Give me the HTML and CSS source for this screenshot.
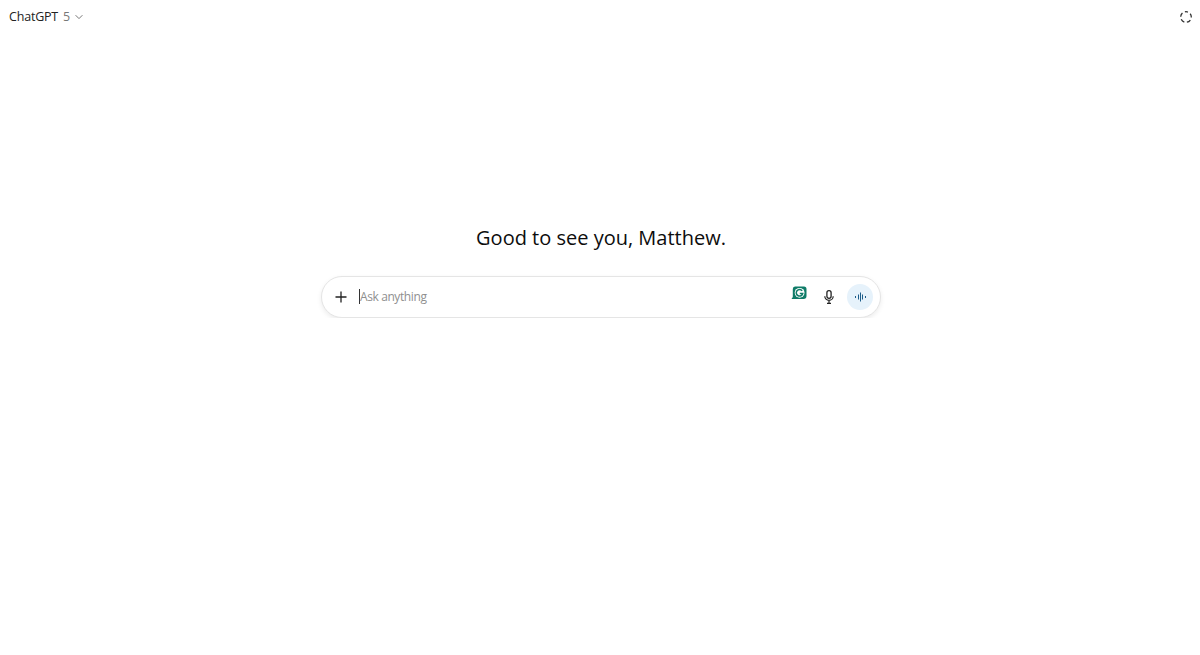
FILE: index.html
```html
<!DOCTYPE html>
<html lang="en">
<head>
    <meta charset="UTF-8">
    <meta name="viewport" content="width=device-width, initial-scale=1.0">
    <title>ChatGPT</title>
    <link rel="stylesheet" href="styles.css">
</head>
<body>
    <header class="top-bar">
        <div class="model-picker">
            <span class="model-name">ChatGPT</span>
            <span class="model-version">5</span>
            <svg class="chevron" width="8" height="6" viewBox="0 0 8 6"><path d="M.6 1.2L4 4.6l3.4-3.4" fill="none" stroke="#777" stroke-width="1"/></svg>
        </div>
        <svg class="temp-chat" width="14" height="14" viewBox="0 0 14 14">
            <circle cx="7" cy="7" r="5.3" fill="none" stroke="#333" stroke-width="1.3" stroke-dasharray="4 2.66" stroke-dashoffset="2" transform="rotate(-90 7 7)"/>
        </svg>
    </header>

    <main class="welcome">
        <h1>Good to see you, Matthew.</h1>
        <form class="composer">
            <svg class="plus" width="12" height="12" viewBox="0 0 12 12"><path d="M6 .5v11M.5 6h11" stroke="#222" stroke-width="1.3"/></svg>
            <div class="prompt"><span class="caret"></span>Ask anything</div>
            <svg class="grammarly" width="16" height="15" viewBox="0 0 16 15">
                <path d="M4 .5H13A2.5 2.5 0 0 1 15.5 3V10A3 3 0 0 1 12.5 13H.5L1.8 11V3A2.5 2.5 0 0 1 4 .5z" fill="#0f7c68"/>
                <circle cx="8.6" cy="6.8" r="4.9" fill="#fff"/>
                <path d="M11.2 4.8A3.3 3.3 0 1 0 11.8 7.4H8.8" fill="none" stroke="#0f7c68" stroke-width="1.5"/>
            </svg>
            <svg class="mic" width="10" height="14" viewBox="0 0 10 14">
                <rect x="2.9" y=".7" width="4.2" height="7.6" rx="2.1" fill="none" stroke="#222" stroke-width="1.3"/>
                <path d="M.8 6.2a4.2 4.2 0 0 0 8.4 0M5 10.5v3M3 13.4h4" fill="none" stroke="#222" stroke-width="1.2"/>
            </svg>
            <button type="button" class="voice">
                <svg width="11" height="10" viewBox="0 0 11 10"><path d="M.5 4v2M3.5 2.5v5M5.5 .5v9M7.5 2.5v5M10.5 4v2" stroke="#1c5d8a" stroke-width="1"/></svg>
            </button>
        </form>
    </main>
</body>
</html>
```

FILE: styles.css
```css
body {
    font-family: "Open Sans", "Noto Sans", Arial, sans-serif;
    margin: 0;
    padding: 0;
    background-color: #fff;
    color: #0d0d0d;
}

.top-bar {
    display: flex;
    justify-content: space-between;
    align-items: center;
    height: 33px;
    padding: 0 7px 0 9px;
}

.model-picker {
    display: flex;
    align-items: center;
    gap: 5px;
    font-size: 12.5px;
    letter-spacing: -0.2px;
}

.model-name {
    color: #222;
}

.model-version {
    color: #777;
}

.welcome {
    display: flex;
    flex-direction: column;
    align-items: center;
    padding: 191px 0 0 2px;
}

h1 {
    margin: 0 0 24px;
    font-size: 20px;
    line-height: 28px;
    font-weight: 400;
    color: #0d0d0d;
}

.composer {
    display: flex;
    align-items: center;
    box-sizing: border-box;
    width: 560px;
    height: 42px;
    padding: 0 7px 0 13px;
    border: 1px solid #e5e5e5;
    border-radius: 21px;
    background-color: #fff;
    box-shadow: 0 2px 5px rgba(0, 0, 0, 0.08);
}

.plus {
    margin-right: 12px;
}

.prompt {
    flex: 1;
    display: flex;
    align-items: center;
    font-size: 12px;
    letter-spacing: -0.4px;
    line-height: 16px;
    margin-top: -1px;
    color: #8f8f8f;
}

.caret {
    width: 1px;
    height: 15px;
    background-color: #333;
}

.grammarly {
    margin: -7px 17px 0 0;
}

.mic {
    margin-right: 13px;
}

.voice {
    display: flex;
    align-items: center;
    justify-content: center;
    width: 26px;
    height: 26px;
    padding: 0;
    border: none;
    border-radius: 50%;
    background-color: #e6f2fb;
}
```
